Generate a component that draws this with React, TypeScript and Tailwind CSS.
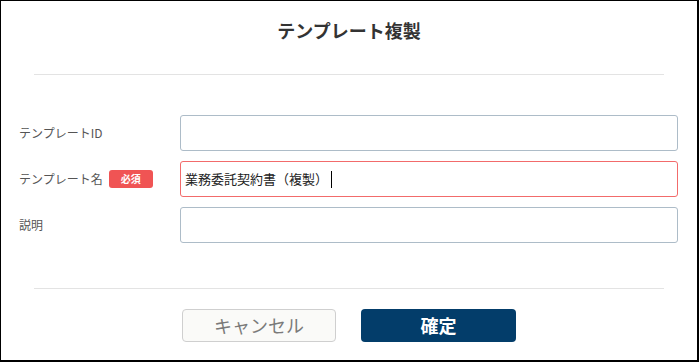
const font = { fontFamily: '"Noto Sans CJK JP", "Noto Sans", sans-serif' };

function Field({
  label,
  required,
  error,
  value,
  focused,
}: {
  label: string;
  required?: boolean;
  error?: boolean;
  value?: string;
  focused?: boolean;
}) {
  return (
    <div className="flex items-center h-[36px]">
      <div className="w-[161px] flex items-center gap-[6px] text-[12px] text-[#555]">
        <span>{label}</span>
        {required && (
          <span className="w-[44px] h-[18px] rounded-[3px] bg-[#f05454] text-white text-[10px] font-bold flex items-center justify-center leading-none">
            必須
          </span>
        )}
      </div>
      <div
        className={`w-[498px] h-[36px] rounded-[3px] border bg-white flex items-center pl-[4px] text-[13px] text-[#222] ${
          error ? "border-[#f26b6b]" : "border-[#adbcc8]"
        }`}
      >
        {value}
        {focused && <span className="ml-[3px] w-px h-[17px] bg-black" />}
      </div>
    </div>
  );
}

export default function App() {
  return (
    <div
      style={font}
      className="w-[699px] h-[362px] bg-white border-black border-t border-l border-r-2 border-b-2"
    >
      {/* Header */}
      <div className="h-[73px] pt-[18px] flex justify-center">
        <h1 className="text-[18px] leading-[22px] font-bold text-[#333]">テンプレート複製</h1>
      </div>
      <div className="mx-[33px] border-t border-[#e3e3e3]" />

      {/* Form */}
      <div className="mt-[40px] pl-[18px] flex flex-col gap-[10px]">
        <Field label="テンプレートID" />
        <Field label="テンプレート名" required error value="業務委託契約書（複製）" focused />
        <Field label="説明" />
      </div>

      <div className="mt-[45px] mx-[33px] border-t border-[#e3e3e3]" />

      {/* Footer buttons */}
      <div className="mt-[20px] flex justify-center gap-[25px]">
        <button className="w-[154px] h-[33px] rounded-[4px] border border-[#cfcfcf] bg-[#fafaf8] text-[18px] text-[#7a7a7a] flex items-center justify-center">
          キャンセル
        </button>
        <button className="w-[155px] h-[33px] rounded-[4px] bg-[#033d6a] text-[18px] font-bold text-white flex items-center justify-center">
          確定
        </button>
      </div>
    </div>
  );
}
